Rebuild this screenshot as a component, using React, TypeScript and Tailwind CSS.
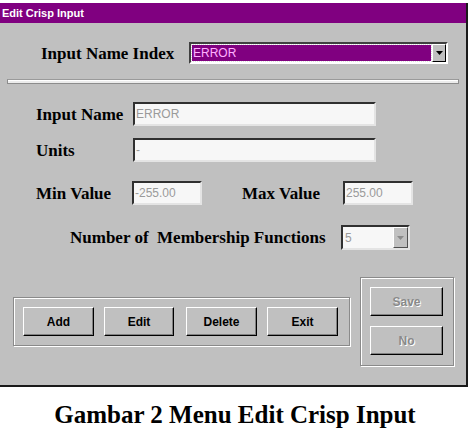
import React from "react";

const serif = { fontFamily: '"Liberation Serif", "Times New Roman", serif' };
const sans = { fontFamily: '"Liberation Sans", Arial, sans-serif' };

function Raised({ children, className = "", disabled = false }: { children?: React.ReactNode; className?: string; disabled?: boolean }) {
  return (
    <div
      className={
        "flex items-center justify-center bg-[#c0c0c0] border border-t-white border-l-white border-r-black border-b-black shadow-[inset_-1px_-1px_0_#808080] text-[12px] font-bold " +
        (disabled ? "text-[#8a8a8a] [text-shadow:1px_1px_0_#ffffff] " : "text-black ") +
        className
      }
      style={sans}
    >
      {children}
    </div>
  );
}

function Field({ value, className = "" }: { value: string; className?: string }) {
  return (
    <div
      className={
        "flex items-center bg-[#f7f7f7] border-2 border-t-[#303030] border-l-[#303030] border-r-[#e4e4e4] border-b-[#e4e4e4] pl-[1px] text-[12px] text-[#9a9a9a] " +
        className
      }
      style={sans}
    >
      {value}
    </div>
  );
}

function Label({ children, className = "" }: { children: React.ReactNode; className?: string }) {
  return (
    <div className={"text-[17px] font-bold text-black leading-none whitespace-nowrap " + className} style={serif}>
      {children}
    </div>
  );
}

export default function App() {
  return (
    <div className="w-[470px] h-[447px] bg-white overflow-hidden flex flex-col">
      <div className="mt-[3px] w-[468px] h-[384px] bg-[#c0c0c0] border-r-2 border-b-2 border-[#1a1a1a] flex flex-col">
        <div className="h-[20px] bg-[#800080] flex items-center pl-[2px] text-white text-[11px] font-bold" style={sans}>
          Edit Crisp Input
        </div>

        <div className="flex items-center mt-[19px] h-[22px]">
          <Label className="ml-[41px] w-[148px]">Input Name Index</Label>
          <div className="w-[259px] h-[22px] flex border-2 border-t-[#404040] border-l-[#404040] border-r-white border-b-white bg-white">
            <div className="flex-1 m-[1px] bg-[#800080] outline-1 outline-dotted outline-[#e0e0e0] flex items-center pl-[1px] text-[12px] text-[#ffb0ff]" style={sans}>
              ERROR
            </div>
            <div className="w-[14px] bg-[#c0c0c0] border border-t-white border-l-white border-r-black border-b-black flex items-center justify-center">
              <svg width="7" height="4" viewBox="0 0 7 4"><path d="M0 0h7L3.5 4z" fill="#000" /></svg>
            </div>
          </div>
        </div>

        <div className="mt-[15px] ml-[7px] w-[452px] h-[5px] border border-[#8c8c8c] border-t-[#9a9a9a] bg-[#ececec] shadow-[inset_0_1px_0_#ffffff]" />

        <div className="flex items-center mt-[18px] h-[24px]">
          <Label className="ml-[36px] w-[97px]">Input Name</Label>
          <Field value="ERROR" className="w-[243px] h-[24px]" />
        </div>

        <div className="flex items-center mt-[12px] h-[24px]">
          <Label className="ml-[36px] w-[97px]">Units</Label>
          <Field value="-" className="w-[243px] h-[24px]" />
        </div>

        <div className="flex items-center mt-[19px] h-[24px]">
          <Label className="ml-[36px] w-[96px]">Min Value</Label>
          <Field value="-255.00" className="w-[70px] h-[24px]" />
          <Label className="ml-[40px] w-[101px]">Max Value</Label>
          <Field value="255.00" className="w-[70px] h-[24px]" />
        </div>

        <div className="flex items-center mt-[20px] h-[25px]">
          <Label className="ml-[70px] w-[271px]">Number of&nbsp; Membership Functions</Label>
          <div className="w-[69px] h-[25px] flex border-2 border-t-[#303030] border-l-[#303030] border-r-[#e4e4e4] border-b-[#e4e4e4] bg-[#f7f7f7]">
            <div className="flex-1 flex items-center pl-[2px] text-[12px] text-[#9a9a9a]" style={sans}>5</div>
            <div className="w-[15px] bg-[#c0c0c0] border border-t-white border-l-white border-r-[#505050] border-b-[#505050] flex items-center justify-center">
              <svg width="7" height="4" viewBox="0 0 7 4"><path d="M0 0h7L3.5 4z" fill="#8a8a8a" /></svg>
            </div>
          </div>
        </div>

        <div className="flex mt-[27px]">
          <div className="ml-[13px] mt-[20px] w-[337px] h-[49px] border border-[#8a8a8a] shadow-[inset_1px_1px_0_#ffffff,1px_1px_0_#ffffff] flex items-center pl-[9px] gap-[10px]">
            <Raised className="w-[71px] h-[29px]">Add</Raised>
            <Raised className="w-[70px] h-[29px]">Edit</Raised>
            <Raised className="w-[71px] h-[29px] ml-[2px]">Delete</Raised>
            <Raised className="w-[71px] h-[29px]">Exit</Raised>
          </div>
          <div className="ml-[10px] w-[94px] h-[89px] border border-[#8a8a8a] shadow-[inset_1px_1px_0_#ffffff,1px_1px_0_#ffffff] flex flex-col items-start pl-[9px] pt-[9px] gap-[10px]">
            <Raised disabled className="w-[73px] h-[29px]">Save</Raised>
            <Raised disabled className="w-[73px] h-[29px]">No</Raised>
          </div>
        </div>
      </div>

      <div className="mt-[15px] text-center text-[25px] font-bold text-black leading-none" style={serif}>
        Gambar 2 Menu Edit Crisp Input
      </div>
    </div>
  );
}
